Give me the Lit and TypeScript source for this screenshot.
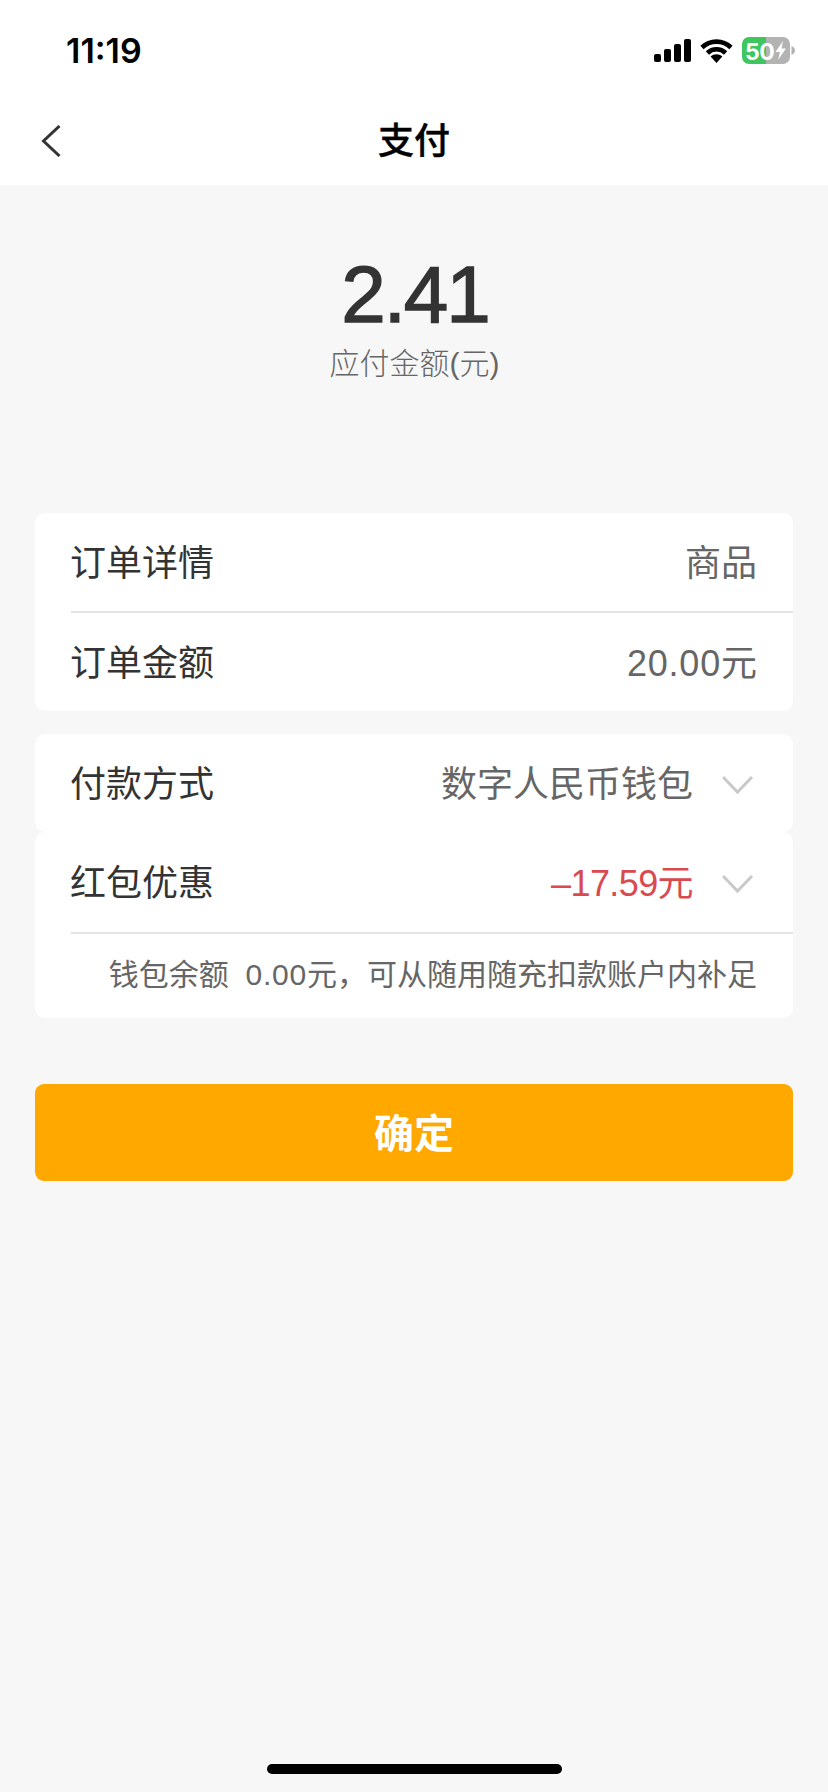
import { LitElement, html, css, svg } from "lit";
import { customElement } from "lit/decorators.js";

const chevron = html`<svg class="chev" width="33" height="20" viewBox="0 0 33 20"><path d="M1 2 L15.5 17 L30 2" fill="none" stroke="#c9c9c9" stroke-width="3"/></svg>`;

@customElement("app-root")
export class AppRoot extends LitElement {
  static styles = css`
    :host { display: block; width: 828px; height: 1792px; background: #f7f7f7; position: relative; overflow: hidden;
      font-family: "Liberation Sans", "Noto Sans CJK SC", sans-serif; color: #333; }
    .top { background: #fff; height: 185px; display: flex; flex-direction: column; }
    .status { height: 100px; display: flex; align-items: center; justify-content: space-between; padding: 0 33px 0 66px; box-sizing: border-box; }
    .time { font-family: Inter, "Liberation Sans", sans-serif; font-weight: 600; font-size: 34px; color: #000; letter-spacing: 0; }
    .icons { display: flex; align-items: center; gap: 9px; }
    .nav { flex: 1; position: relative; display: flex; align-items: center; justify-content: center; padding-bottom: 10px; }
    .back { position: absolute; left: 41px; top: 25px; }
    .title { font-family: "Noto Sans CJK SC", sans-serif; font-size: 36px; font-weight: 500; color: #000; line-height: 50px; -webkit-text-stroke: 0.4px #000; }
    .amount { display: flex; flex-direction: column; align-items: center; padding-top: 68px; height: 328px; box-sizing: border-box; }
    .num { font-size: 80px; line-height: 84px; font-weight: 400; color: #333; -webkit-text-stroke: 1.4px #333; letter-spacing: -2px; margin-right: -2px; }
    .lbl { font-size: 30px; line-height: 36px; color: #666; font-family: "Noto Sans CJK SC", sans-serif; margin-top: 6px; font-weight: 300; padding-left: 1px; }
    .lbl .p { font-family: "Liberation Sans", sans-serif; }
    .card { margin: 0 35px; background: #fff; border-radius: 10px; }
    .card.g2 { margin-top: 23px; }
    .row { height: 98px; padding: 0 36px 4px 35px; box-sizing: border-box; display: flex; align-items: center; justify-content: space-between; font-size: 36px; }
    .row.tall { height: 100px; }
    .k { font-family: "Noto Sans CJK SC", sans-serif; font-weight: 400; color: #333; }
    .v { color: #666; font-weight: 400; display: flex; align-items: center; font-family: "Liberation Sans", "Noto Sans CJK SC", sans-serif; }
    .v.wide { letter-spacing: 0.8px; margin-right: -0.8px; }
    .v.red { color: #d94a4f; letter-spacing: -0.6px; }
    .right { display: flex; align-items: center; gap: 29px; margin-right: 2px; }
    .chev { display: block; margin-top: 8px; }
    .div { height: 2px; background: #e5e5e5; margin-left: 36px; }
    .note { height: 84px; padding: 0 36px 8px 0; box-sizing: border-box; display: flex; align-items: center; justify-content: flex-end; font-size: 30px; color: #666; white-space: pre; }
    .amt { letter-spacing: 0.8px; }
    .btn { margin: 66px 35px 0; height: 97px; padding-bottom: 3px; box-sizing: border-box; border-radius: 9px; background: #ffa800; color: #fff; display: flex; align-items: center; justify-content: center;
      font-family: "Noto Sans CJK SC", sans-serif; font-weight: 700; font-size: 40px; }
    .home { position: absolute; left: 267px; top: 1764px; width: 295px; height: 10px; border-radius: 5px; background: #000; }
  `;

  render() {
    return html`
      <div class="top">
        <div class="status">
          <span class="time">11:19</span>
          <div class="icons">
            <svg width="37" height="23" viewBox="0 0 37 23"><rect x="0" y="15" width="7" height="8" rx="2"/><rect x="10" y="10" width="7" height="13" rx="2"/><rect x="20" y="5" width="7" height="18" rx="2"/><rect x="30" y="0" width="7" height="23" rx="2"/></svg>
            <svg width="33" height="25" viewBox="0 0 33 25">
              <path d="M16.5 25 L10.6 18.6 C14 15.4 19 15.4 22.4 18.6 Z"/>
              <path d="M2 9.5 C10 1.6 23 1.6 31 9.5" fill="none" stroke="#000" stroke-width="4.6"/>
              <path d="M7.4 15 C12.4 10 20.6 10 25.6 15" fill="none" stroke="#000" stroke-width="4.6"/>
            </svg>
            <svg width="53" height="27" viewBox="0 0 53 27">
              <defs><clipPath id="b"><rect width="48" height="27" rx="7"/></clipPath></defs>
              <g clip-path="url(#b)"><rect width="24" height="27" fill="#3fc65f"/><rect x="24" width="24" height="27" fill="#b3b3b3"/></g>
              <path d="M49.5 9 C52 10 53 12 53 13.5 C53 15 52 17 49.5 18 Z" fill="#b3b3b3"/>
              ${svg`<text x="3" y="22.5" font-family="Inter, Liberation Sans, sans-serif" font-weight="700" font-size="23" fill="#fff" letter-spacing="-0.5">50</text>`}
              <path d="M41 4 L33.5 15 H38 L36 23 L44 11.5 H39.5 Z" fill="#fff"/>
            </svg>
          </div>
        </div>
        <div class="nav">
          <svg class="back" width="20" height="32" viewBox="0 0 20 32"><path d="M18.5 1 L2.5 16 L18.5 31" fill="none" stroke="#333" stroke-width="3"/></svg>
          <span class="title">支付</span>
        </div>
      </div>

      <div class="amount">
        <span class="num">2.41</span>
        <span class="lbl">应付金额<span class="p">(</span>元<span class="p">)</span></span>
      </div>

      <div class="card">
        <div class="row"><span class="k">订单详情</span><span class="v">商品</span></div>
        <div class="div"></div>
        <div class="row"><span class="k">订单金额</span><span class="v wide">20.00元</span></div>
      </div>

      <div class="card g2">
        <div class="row"><span class="k">付款方式</span><span class="right"><span class="v">数字人民币钱包</span>${chevron}</span></div>
      </div>
      <div class="card">
        <div class="row tall"><span class="k">红包优惠</span><span class="right"><span class="v red">–17.59元</span>${chevron}</span></div>
        <div class="div"></div>
        <div class="note"><span>钱包余额  <span class="amt">0.00</span>元，可从随用随充扣款账户内补足</span></div>
      </div>

      <div class="btn">确定</div>
      <div class="home"></div>
    `;
  }
}
